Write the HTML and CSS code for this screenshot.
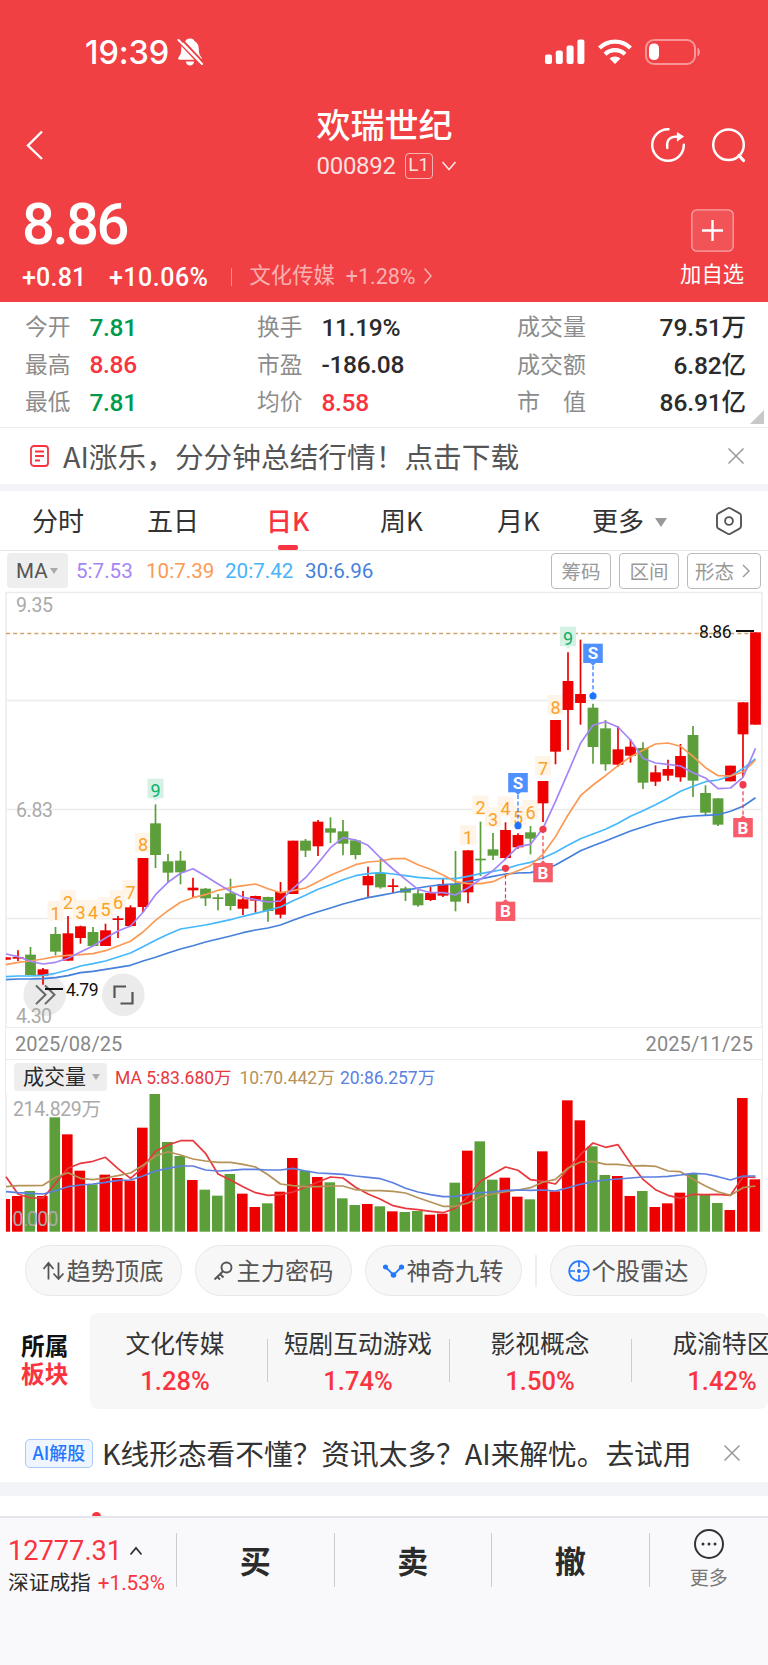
FILE: index.html
```
<!DOCTYPE html>
<html lang="zh-CN">
<head>
  <meta charset="UTF-8" />
  <title>欢瑞世纪 000892</title>
  <meta name="viewport" content="width=device-width, initial-scale=1" />
  <link rel="stylesheet" href="styles.css">
</head>
<body>

  <!-- 顶部 -->
  <header>
    <div class="status-bar">
      <span class="time">19:39</span>
      <svg class="bell" width="26" height="28" viewBox="0 0 26 28">
        <path d="M13 .5c2.500 0 4 1 4.500 2.500 3 1.500 4.300 4.500 4.300 8 0 4.500 1 6 2.700 8.500.8 1.200.2 2.200-1 2.200H2.500c-1.200 0-1.800-1-1-2.200C3.200 17 4.200 15.500 4.200 11c0-3.500 1.300-6.500 4.300-8C9 1.500 10.500.5 13 .5z" fill="#fff"/>
        <path d="M8.800 23.500h8.400c-.5 2.500-2 4-4.200 4s-3.700-1.500-4.200-4z" fill="#fff"/>
        <path d="M2.500-1l25 26.500M-.5 1.500l25 26.500" stroke="#f04043" stroke-width="2"/>
        <path d="M1.500 2l23.500 24" stroke="#fff" stroke-width="2" stroke-linecap="round"/>
      </svg>
      <div class="signals">
        <svg width="40" height="26" viewBox="0 0 40 26" fill="#fff">
          <rect x="0" y="15.500" width="7" height="9.500" rx="2"/>
          <rect x="10.800" y="11.500" width="7" height="13.500" rx="2"/>
          <rect x="21.600" y="6.500" width="7" height="18.500" rx="2"/>
          <rect x="32.400" y="0.500" width="7" height="24.500" rx="2"/>
        </svg>
        <svg width="34" height="26" viewBox="0 0 34 26" fill="none" stroke="#fff" stroke-width="4.200">
          <path d="M1.500 9a22 22 0 0 1 31 0"/>
          <path d="M7 15.200a14.500 14.500 0 0 1 20 0"/>
          <path d="M17 25l-5.500-5.400a8 8 0 0 1 11 0z" fill="#fff" stroke="none"/>
        </svg>
        <svg width="56" height="26" viewBox="0 0 56 26">
          <rect x="1" y="1" width="49" height="24" rx="8" fill="none" stroke="#fff" stroke-opacity=".45" stroke-width="2"/>
          <rect x="4" y="4.500" width="10" height="16.500" rx="4.500" fill="#fff"/>
          <path d="M52.500 8.500c3 1.500 3 7.500 0 9z" fill="#fff" fill-opacity=".5"/>
        </svg>
      </div>
    </div>

    <div class="title-bar">
      <svg class="back" width="18" height="30" viewBox="0 0 18 30"><path d="M16 1.500L2 15.500l14 13.500" fill="none" stroke="#fff" stroke-width="2.400"/></svg>
      <div class="title">
        <h1>欢瑞世纪</h1>
        <div class="code">
          <span class="num">000892</span>
          <span class="level">L1</span>
          <svg width="16" height="12" viewBox="0 0 16 12"><path d="M1.500 2L8 9.500 14.500 2" fill="none" stroke="#fff" stroke-opacity=".85" stroke-width="1.600"/></svg>
        </div>
      </div>
      <div class="actions">
        <svg width="36" height="36" viewBox="0 0 36 36" fill="none" stroke="#fff" stroke-width="2.500">
          <path d="M18.500 2.200a15.800 15.800 0 1 0 15.300 15.500" stroke-linecap="round"/>
          <path d="M17.300 21c-1-8 2-11.500 11-11.500" stroke-linecap="round"/>
          <path d="M27.500 6l5.500 3.500-5.500 4z" fill="#fff" stroke-width="1.200"/>
        </svg>
        <svg width="36" height="36" viewBox="0 0 36 36" fill="none" stroke="#fff" stroke-width="2.500">
          <circle cx="17.500" cy="17.700" r="15.300"/>
          <path d="M28 28.500l4.500 5" stroke-width="3.200" stroke-linecap="round"/>
        </svg>
      </div>
    </div>

    <div class="quote">
      <div>
        <div class="price num">8.86</div>
        <div class="change num">
          <span class="diff">+0.81</span>
          <span class="pct">+10.06%</span>
          <i></i>
          <span class="industry">文化传媒</span>
          <span class="industry-pct">+1.28%</span>
          <svg width="10" height="18" viewBox="0 0 10 18"><path d="M1.500 1.500L8 9l-6.500 7.500" fill="none" stroke="#fff" stroke-opacity=".6" stroke-width="1.500"/></svg>
        </div>
      </div>
      <div class="add">
        <svg width="43" height="43" viewBox="0 0 43 43">
          <rect x=".8" y=".8" width="41.400" height="41.400" rx="5" fill="#fff" fill-opacity=".1" stroke="#fff" stroke-opacity=".5" stroke-width="1.300"/>
          <path d="M11 21.500h21M21.500 11v21" stroke="#fff" stroke-width="2.400"/>
        </svg>
        <span>加自选</span>
      </div>
    </div>
  </header>

  <!-- 行情数据 -->
  <section class="stats num">
    <div><label>今开</label><b class="green">7.81</b></div>
    <div><label>换手</label><b>11.19%</b></div>
    <div class="wide"><label>成交量</label><b>79.51万</b></div>
    <div><label>最高</label><b class="red">8.86</b></div>
    <div><label>市盈</label><b>-186.08</b></div>
    <div class="wide"><label>成交额</label><b>6.82亿</b></div>
    <div><label>最低</label><b class="green">7.81</b></div>
    <div><label>均价</label><b class="red">8.58</b></div>
    <div class="wide"><label>市　值</label><b>86.91亿</b></div>
    <span class="corner"></span>
  </section>

  <section class="ad">
    <svg width="20" height="22" viewBox="0 0 20 22" fill="none" stroke="#f93440" stroke-width="1.800">
      <rect x="1" y="1" width="17" height="20" rx="3"/>
      <path d="M5 6.500h9M5 11h9M5 15.500h5"/>
    </svg>
    <p>AI涨乐，分分钟总结行情！点击下载</p>
    <svg class="close" width="18" height="18" viewBox="0 0 18 18"><path d="M1.500 1.500l15 15M16.500 1.500l-15 15" stroke="#999" stroke-width="1.500"/></svg>
  </section>

  <!-- 周期切换 -->
  <nav class="tabs">
    <a>分时</a>
    <a>五日</a>
    <a class="active">日K</a>
    <a>周K</a>
    <a>月K</a>
    <a class="more">更多<i class="caret"></i></a>
    <svg width="28" height="30" viewBox="0 0 28 30" fill="none" stroke="#555" stroke-width="1.900">
      <path d="M12.700 2.300q1.300-.8 2.600 0l9.200 5q1.500.9 1.500 2.600v10.200q0 1.700-1.500 2.600l-9.200 5q-1.300.8-2.600 0l-9.200-5Q2 21.800 2 20.100V9.900q0-1.700 1.500-2.600z"/>
      <circle cx="14" cy="15" r="3.900"/>
    </svg>
  </nav>

  <section class="ma-row num">
    <span class="ma-select">MA<i class="caret"></i></span>
    <span class="ma5">5:7.53</span>
    <span class="ma10">10:7.39</span>
    <span class="ma20">20:7.42</span>
    <span class="ma30">30:6.96</span>
    <div class="tools">
      <button>筹码</button>
      <button>区间</button>
      <button class="shape">形态<svg width="9" height="14" viewBox="0 0 9 14"><path d="M1 1l6 6-6 6" fill="none" stroke="#999" stroke-width="1.400"/></svg></button>
    </div>
  </section>

  <!-- K线图 -->
  <svg id="kline" class="chart" width="768" height="437" viewBox="0 590 768 437"></svg>

  <div class="dates num"><span>2025/08/25</span><span>2025/11/25</span></div>

  <div class="vol-row num">
    <span class="vol-select">成交量<i class="caret"></i></span>
    <span class="v5">MA 5:83.680万</span>
    <span class="v10">10:70.442万</span>
    <span class="v20">20:86.257万</span>
  </div>
  <svg id="volume" class="chart" width="768" height="140" viewBox="0 1093 768 140"></svg>

  <section class="pills">
    <a>
      <svg width="22" height="20" viewBox="0 0 22 20" fill="none" stroke="#555" stroke-width="1.800"><path d="M.5 8L5.500 2l5 6M5.500 2v16.500M15.500 1.500V18M10.500 12.500l5 5.500 5-5.500"/></svg>趋势顶底
    </a>
    <a>
      <svg width="22" height="20" viewBox="0 0 22 20" fill="none" stroke="#555" stroke-width="1.900"><circle cx="13.500" cy="6.500" r="5"/><path d="M10 10.200L1.500 18.500M7 13l3.500 3.500M4 15.500l3 3"/></svg>主力密码
    </a>
    <a>
      <svg width="22" height="20" viewBox="0 0 22 20" fill="#2279ff" stroke="#2279ff" stroke-width="1.800"><path d="M2.500 6l8 8 8-8" fill="none"/><circle cx="2.500" cy="6" r="1.700"/><circle cx="10.500" cy="14" r="1.900"/><circle cx="18.500" cy="6" r="1.700"/></svg>神奇九转
    </a>
    <i class="line"></i>
    <a>
      <svg width="22" height="22" viewBox="0 0 22 22" fill="none" stroke="#2279ff" stroke-width="1.700"><circle cx="11" cy="11" r="9.800"/><path d="M11 1v6M11 15v6M1 11h6M15 11h6"/><circle cx="11" cy="11" r="1.200" fill="#2279ff"/></svg>个股雷达
    </a>
  </section>

  <!-- 所属板块 -->
  <section class="sector">
    <div class="sector-title">所属<br><em>板块</em></div>
    <div class="sector-list num">
      <div><span>文化传媒</span><b>1.28%</b></div>
      <div><span>短剧互动游戏</span><b>1.74%</b></div>
      <div><span>影视概念</span><b>1.50%</b></div>
      <div><span>成渝特区</span><b>1.42%</b></div>
    </div>
  </section>

  <section class="ai-tip">
    <span class="badge">AI解股</span>
    <p>K线形态看不懂？资讯太多？AI来解忧。去试用</p>
    <svg class="close" width="18" height="18" viewBox="0 0 18 18"><path d="M1.500 1.500l15 15M16.500 1.500l-15 15" stroke="#999" stroke-width="1.500"/></svg>
  </section>

  <div class="next-card"><i></i></div>

  <!-- 底部交易栏 -->
  <footer>
    <div class="index num">
      <div class="index-value">12777.31<svg width="14" height="10" viewBox="0 0 14 10"><path d="M1.500 8.500L7 2l5.500 6.500" fill="none" stroke="#333" stroke-width="1.800"/></svg></div>
      <div class="index-name">深证成指<b>+1.53%</b></div>
    </div>
    <a>买</a>
    <a>卖</a>
    <a>撤</a>
    <div class="footer-more">
      <svg width="32" height="32" viewBox="0 0 32 32"><circle cx="16" cy="16" r="14" fill="none" stroke="#333" stroke-width="2"/><g fill="#333"><circle cx="10" cy="16" r="1.500"/><circle cx="16" cy="16" r="1.500"/><circle cx="22" cy="16" r="1.500"/></g></svg>
      <span>更多</span>
    </div>
  </footer>

  <script src="chart.js"></script>
</body>
</html>
```
FILE: styles.css
```
:root {
  --red: #f93440;
  --header: #f04043;
  --green: #009a4e;
  --text: #2b2b2b;
  --gray: #8c8c8c;
  --line: #ececec;
}

* {
  box-sizing: border-box;
}

body {
  margin: 0;
  width: 768px;
  height: 1665px;
  overflow: hidden;
  display: flex;
  flex-direction: column;
  font-family: "Noto Sans CJK SC", sans-serif;
  color: var(--text);
  background: white;
}

body > * {
  flex-shrink: 0;
}

.num {
  font-family: Roboto, "Noto Sans CJK SC", sans-serif;
}

svg {
  display: block;
  flex-shrink: 0;
}

h1, p {
  margin: 0;
}

b {
  font-weight: 500;
}

/* 顶部 */
header {
  background: var(--header);
  color: white;
  height: 302px;
}

.status-bar {
  display: flex;
  align-items: center;
  height: 104px;
  padding: 0 67px 0 85px;
}

.time {
  font-family: Inter, sans-serif;
  font-size: 32.5px;
  font-weight: 500;
  letter-spacing: -0.1px;
  padding-top: 1px;
}

.bell {
  margin-left: 8px;
}

.signals {
  display: flex;
  align-items: center;
  gap: 13px;
  margin-left: auto;
}

.title-bar {
  display: grid;
  grid-template-columns: 1fr auto 1fr;
  align-items: center;
  height: 82px;
  padding: 0 21px 0 26px;
}

.back {
  margin-bottom: 5px;
}

.title h1 {
  font-size: 34px;
  font-weight: 500;
  line-height: 40px;
}

.title {
  width: 138px;
  margin-left: -2px;
  padding-bottom: 7px;
}

.code {
  display: flex;
  align-items: center;
  height: 34px;
  margin-top: 5px;
  padding-bottom: 1px;
  font-size: 24px;
  color: rgba(255,255,255,0.85);
}

.code .num {
  letter-spacing: -0.3px;
}

.level {
  width: 28px;
  height: 26px;
  margin: 0 8px 0 9px;
  border: 1.5px solid rgba(255,255,255,0.6);
  border-radius: 4px;
  font-family: Roboto, sans-serif;
  font-size: 19px;
  line-height: 22px;
  text-align: center;
  flex-shrink: 0;
}

.actions {
  display: flex;
  justify-content: flex-end;
  gap: 25px;
  margin-bottom: 5px;
}

.quote {
  display: flex;
  justify-content: space-between;
  height: 116px;
  padding: 0 24px 0 22px;
}

.price {
  height: 73px;
  font-size: 58px;
  font-weight: 500;
  line-height: 77px;
  letter-spacing: -2.5px;
}

.change {
  display: flex;
  align-items: center;
  height: 36px;
  font-size: 25px;
  font-weight: 500;
}

.change .diff {
  letter-spacing: 0.2px;
}

.change .pct {
  margin-left: 22.5px;
  letter-spacing: 0.5px;
}

.change i {
  width: 1px;
  height: 18px;
  margin: 0 18px 0 22px;
  background: rgba(255,255,255,0.4);
}

.industry {
  font-size: 21.3px;
  font-weight: 400;
  line-height: 30px;
  margin-top: -2px;
  color: rgba(255,255,255,0.6);
}

.industry-pct {
  margin: -2px 7px 0 11px;
  font-size: 21.5px;
  font-weight: 400;
  color: rgba(255,255,255,0.6);
}

.change svg {
  margin-top: -2px;
}

.add {
  display: flex;
  flex-direction: column;
  align-items: flex-end;
  padding-top: 23px;
  font-size: 21.3px;
}

.add svg {
  margin-right: 10px;
}

.add span {
  line-height: 30px;
  margin-top: 6px;
}

/* 行情数据 */
.stats {
  position: relative;
  display: grid;
  grid-template-columns: 232px 260px 1fr;
  grid-auto-rows: 37.5px;
  height: 126px;
  padding: 5px 22px 0 25px;
  border-bottom: 1.5px solid var(--line);
}

.stats div {
  display: flex;
  align-items: center;
  font-size: 24.5px;
}

.stats label {
  font-size: 22.7px;
  color: var(--gray);
  margin-right: 19px;
}

.stats b {
  padding-top: 3px;
  letter-spacing: -0.3px;
}

.stats .wide b {
  padding-top: 0;
  letter-spacing: -0.1px;
}

.stats .wide {
  justify-content: space-between;
}

.stats .wide label {
  font-size: 23px;
  padding-bottom: 1px;
}

.red {
  color: var(--red);
}

.green {
  color: var(--green);
}

.corner {
  position: absolute;
  right: 4px;
  bottom: 3px;
  border-left: 14px solid transparent;
  border-bottom: 14px solid #c8c8c8;
}

.ad {
  display: flex;
  align-items: center;
  height: 63px;
  padding: 0 23px 0 30px;
  border-bottom: 7px solid #f3f4f8;
  font-size: 28.7px;
  color: #555;
}

.ad p {
  margin: -2px 0 0 13px;
}

.close {
  margin-left: auto;
}

/* 周期切换 */
.tabs {
  display: flex;
  align-items: center;
  height: 60px;
  padding-left: 32px;
  border-bottom: 1.5px solid #e6e6e6;
  font-size: 26px;
  color: #333;
}

.tabs a {
  position: relative;
  line-height: 56px;
  height: 58px;
  width: 115px;
}

.tabs a:nth-child(2) {
  width: 119px;
}

.tabs a:nth-child(3) {
  width: 114px;
}

.tabs a:nth-child(4) {
  width: 117px;
}

.tabs a:nth-child(5) {
  width: 95px;
}

.tabs a.more {
  width: 123px;
}

.tabs .active {
  color: var(--red);
  font-weight: 500;
}

.tabs .active::after {
  content: "";
  position: absolute;
  left: 12px;
  bottom: 0;
  width: 20px;
  height: 5px;
  border-radius: 2px;
  background: var(--red);
}

.caret {
  display: inline-block;
  border: 6px solid transparent;
  border-top: 9px solid #999;
  border-bottom: none;
}

.more .caret {
  margin-left: 11px;
  vertical-align: 4px;
}

.ma-row {
  display: flex;
  align-items: center;
  height: 39px;
  padding: 0 7px;
  font-size: 20.6px;
}

.ma-select {
  display: flex;
  align-items: center;
  width: 61px;
  height: 35px;
  padding-left: 9px;
  margin-right: 8px;
  border-radius: 4px;
  background: #eee;
  color: #555;
}

.ma-select .caret {
  border-width: 4px;
  border-top: 6px solid #aaa;
  border-bottom: none;
  margin-left: 2px;
}

.ma5 { color: #a585f5; width: 70px; }
.ma10 { color: #fb9a55; width: 79px; }
.ma20 { color: #46b4fb; width: 80px; }
.ma30 { color: #4580dc; }

.tools {
  display: flex;
  gap: 8px;
  margin-left: auto;
}

.tools button {
  width: 60px;
  height: 36px;
  padding: 0;
  border: 1.5px solid #bbb;
  border-radius: 4px;
  background: white;
  font-family: "Noto Sans CJK SC", sans-serif;
  font-size: 19.5px;
  line-height: 30px;
  color: #999;
}

.tools .shape {
  display: flex;
  align-items: center;
  justify-content: center;
  gap: 8px;
  width: 74px;
  padding-right: 2px;
}

/* 图表 */
.dates {
  display: flex;
  justify-content: space-between;
  height: 33px;
  margin: 0 5px;
  padding: 0 9px 0 9px;
  border: 1.5px solid var(--line);
  font-size: 20px;
  line-height: 32px;
  letter-spacing: 0.1px;
  color: #888;
}

.vol-row {
  display: flex;
  align-items: center;
  height: 33px;
  margin: 0 5px;
  padding-left: 8px;
  border: 1.5px solid var(--line);
  border-width: 0 1.5px;
  font-size: 17.5px;
}

.vol-select {
  display: flex;
  align-items: center;
  width: 93px;
  height: 28px;
  padding: 0 0 3px 9px;
  margin-right: 8px;
  border-radius: 4px;
  background: #eee;
  font-size: 21px;
}

.vol-select .caret {
  border-width: 4px;
  border-top: 6px solid #aaa;
  border-bottom: none;
  margin: 4px 0 0 6px;
}

.v5 { color: #e8383d; width: 124.5px; }
.v10 { color: #b59258; width: 100.5px; }
.v20 { color: #5c7fe2; }

.chart text {
  font-family: Roboto, "Noto Sans CJK SC", sans-serif;
}

.axis {
  font-size: 19.5px;
  fill: #aaa;
}

/* 工具 */
.pills {
  display: flex;
  align-items: center;
  height: 79px;
  padding: 0 25px 4px;
  gap: 13px;
}

.pills a {
  display: flex;
  align-items: center;
  justify-content: center;
  width: 157px;
  height: 51px;
  padding: 0 1px 2px 0;
  border: 1.5px solid #e8e8e8;
  border-radius: 26px;
  background: #f7f7f7;
  font-size: 24.2px;
  color: #555;
}

.pills a svg {
  margin: 2px 2px 0 0;
}

.line {
  width: 2px;
  height: 32px;
  background: #eee;
}

/* 所属板块 */
.sector {
  display: flex;
  align-items: center;
  height: 97px;
  padding: 1px 0 0 21px;
}

.sector-title {
  width: 69px;
  padding-bottom: 4px;
  font-size: 23.7px;
  font-weight: 700;
  line-height: 28px;
  color: #111;
}

.sector-title em {
  font-style: normal;
  color: var(--red);
}

.sector-list {
  display: flex;
  width: 678px;
  height: 96px;
  overflow: hidden;
  border-radius: 8px;
  background: #f7f7f7;
}

.sector-list div {
  position: relative;
  flex: 0 0 182px;
  display: flex;
  flex-direction: column;
  align-items: center;
  padding-top: 14px;
}

.sector-list div:first-child {
  flex-basis: 177px;
  padding-right: 7px;
}

.sector-list div + div::before {
  content: "";
  position: absolute;
  left: 0;
  top: 26px;
  width: 1px;
  height: 43px;
  background: #ccc;
}

.sector-list span {
  font-size: 24.7px;
  line-height: 36px;
  white-space: nowrap;
  color: #333;
}

.sector-list b {
  font-size: 25.5px;
  line-height: 36px;
  color: var(--red);
}

.ai-tip {
  display: flex;
  align-items: center;
  height: 73px;
  padding: 19px 27px 4px 25px;
}

.badge {
  width: 68px;
  height: 29px;
  border: 1.5px solid #a9c8fb;
  border-radius: 5px;
  background: #eef5ff;
  color: #2279ff;
  font-size: 18px;
  font-weight: 500;
  line-height: 25px;
  text-align: center;
}

.ai-tip p {
  margin: -1px 0 0 9px;
  font-size: 28.7px;
  line-height: 36px;
  white-space: nowrap;
  color: #333;
}

.next-card {
  height: 34px;
  border-top: 14px solid #f3f4f8;
  overflow: hidden;
}

.next-card i {
  display: block;
  width: 9px;
  height: 9px;
  margin: 16px 0 0 92px;
  border-radius: 50%;
  background: var(--red);
}

/* 底部交易栏 */
footer {
  display: flex;
  height: 149px;
  padding-top: 15px;
  border-top: 2px solid #e6e6ea;
  background: #f9f9fc;
}

footer > * {
  height: 54px;
}

.index {
  width: 176px;
  padding-left: 8px;
}

.index-value {
  display: flex;
  align-items: center;
  gap: 7px;
  margin-top: 1px;
  font-size: 27.2px;
  line-height: 34px;
  color: var(--red);
}

.index-name {
  font-size: 20.7px;
  line-height: 30px;
  white-space: nowrap;
}

.index-name b {
  margin-left: 7px;
  font-weight: 400;
  color: var(--red);
}

footer a,
.footer-more {
  border-left: 1px solid #ccc;
}

footer a {
  width: 157.5px;
  font-size: 31px;
  font-weight: 700;
  line-height: 54px;
  text-align: center;
}

.footer-more {
  flex: 1;
  display: flex;
  flex-direction: column;
  align-items: center;
  font-size: 19px;
  color: #777;
}

.footer-more svg {
  margin-top: -5px;
}

.footer-more span {
  line-height: 28px;
  margin-top: 3px;
}
```
FILE: chart.js
```
const RED = "#ee0000";
const GREEN = "#5c9e3a";
const STEP = 12.5;

const cx = i => 5.5 + STEP * i;
const py = v => 580 + v / 3;
const vy = v => 1040 + v / 3;

// 颜色, 最高, 实体上沿, 实体下沿, 最低
const candles = [
  ["r",1132,1132,1139,1139],["r",1111,1131,1136,1143],["g",1101,1124,1185,1185],["r",1164,1168,1187,1214],
  ["g",1041,1062,1115,1126],["r",1008,1060,1142,1142],["r",1037,1039,1074,1091],["g",1041,1056,1098,1098],
  ["r",1031,1051,1098,1098],["r",1008,1015,1020,1074],["r",976,982,1038,1040],["r",834,834,981,997],
  ["g",673,730,825,864],["g",822,844,878,909],["g",813,842,877,913],["r",893,923,931,951],
  ["g",924,926,955,978],["g",942,952,957,991],["g",896,940,978,991],["r",933,958,986,1005],
  ["r",947,948,962,998],["g",950,951,993,1025],["r",906,936,1004,1015],["r",782,782,942,942],
  ["g",777,782,812,831],["r",720,725,799,828],["g",712,745,758,789],["g",720,754,791,826],
  ["g",778,781,825,838],["r",860,888,916,951],["g",836,879,922,926],["r",896,916,921,939],
  ["g",920,925,938,963],["g",930,940,976,980],["r",921,939,960,963],["r",897,912,947,951],
  ["g",813,911,965,994],["r",811,811,937,970],["g",725,836,841,888],["g",759,808,827,840],
  ["r",727,750,834,838],["r",760,765,802,806],["g",738,757,776,823],["r",603,603,670,726],
  ["r",420,420,515,553],["r",217,303,390,510],["r",179,342,369,434],["g",371,383,501,551],
  ["g",420,445,553,572],["r",438,508,554,560],["r",478,500,527,548],["g",487,504,608,627],
  ["r",556,577,605,618],["r",539,567,587,602],["r",492,528,592,605],["g",438,465,602,651],
  ["g",616,639,698,707],["g",655,655,734,738],["r",557,557,604,604],["r",367,367,463,592],
  ["r",157,157,434,434]
];

const ma = {
  "#4580dc": [1199,1197,1197,1196,1193,1187,1178,1174,1168,1162,1156,1143,1132,1119,1107,1097,1086,1077,1068,1058,1050,1044,1035,1021,1007,995,984,972,962,953,946,939,931,924,918,914,912,904,897,889,882,879,878,869,855,834,812,797,783,768,753,741,729,720,712,708,706,704,694,679,653],
  "#46b8fb": [1190,1188,1188,1186,1180,1170,1158,1151,1143,1131,1119,1100,1081,1063,1047,1041,1035,1027,1019,1009,1000,991,981,962,946,928,914,899,887,881,878,882,887,892,895,896,896,889,881,874,867,855,847,834,817,796,776,762,748,730,709,692,674,655,634,619,605,600,588,566,536],
  "#fb9a55": [1154,1147,1143,1137,1130,1126,1124,1121,1112,1098,1084,1056,1021,992,967,953,944,931,923,917,912,926,938,932,924,905,886,870,854,846,843,836,836,854,868,885,905,911,911,905,887,872,857,822,770,705,647,615,587,557,530,511,492,489,499,529,563,587,588,576,540],
  "#a585f5": [1122,1130,1144,1152,1147,1135,1116,1098,1074,1053,1038,997,944,907,880,866,888,912,934,952,959,966,963,925,893,850,803,773,780,796,834,867,898,928,938,938,945,924,898,872,837,800,793,745,664,578,490,436,425,441,480,535,549,553,558,578,594,626,624,592,505]
};

const volumes = [477,468,453,468,232,283,392,433,404,414,422,263,162,306,348,420,449,467,402,461,501,490,455,354,392,411,427,475,495,492,499,514,516,513,524,521,428,332,304,419,413,470,478,334,454,181,241,319,405,408,468,453,501,490,458,401,464,489,510,174,418];

const volMa = {
  "#e8383d": [410,462,474,474,430,385,370,364,352,386,415,383,334,315,302,302,340,402,420,440,458,466,464,456,442,426,411,414,442,462,478,497,505,509,514,518,505,470,424,402,381,391,419,424,432,388,343,309,322,314,370,418,449,466,475,463,464,463,466,411,412],
  "#b59258": [440,437,437,436,412,398,415,419,414,407,399,376,348,335,345,357,363,367,367,373,381,404,432,437,440,440,438,438,449,452,452,454,459,473,486,499,499,489,470,462,455,450,443,426,418,384,366,364,373,373,378,377,379,393,395,418,438,455,466,443,438],
  "#5c7fe2": [455,458,460,462,452,440,435,432,427,421,420,408,393,385,378,378,390,393,391,388,388,390,390,385,393,399,401,403,408,412,416,428,445,456,464,470,469,463,458,456,451,450,451,450,453,443,433,425,420,417,414,411,411,409,405,400,402,410,420,408,408]
};

// 神奇九转: 序号, 数字, 标签上沿
const nine = [
  [4,1,963],[5,2,930],[6,3,960],[7,4,960],[8,5,952],[9,6,931],[10,7,900],[11,8,758],[12,9,596],
  [37,1,736],[38,2,647],[39,3,682],[40,4,649],[41,5,677],[42,6,660],[43,7,528],[44,8,345],[45,9,140]
];

// 买卖点: 序号, 类型, 标签上沿, 圆点
const trades = [[47,"S",191,348],[41,"S",579,737],[40,"B",965,865],[43,"B",849,748],[59,"B",714,614]];

function line(values, y, color) {
  const points = values.map((v, i) => `${Math.max(cx(i), 6)},${y(v).toFixed(1)}`).join(" ");
  return `<polyline points="${points}" fill="none" stroke="${color}" stroke-width="1.7" stroke-linejoin="round"/>`;
}

function drawKline() {
  let s = "";
  [592.5, 700.5, 809.5, 918.5].forEach(y => {
    s += `<path d="M6 ${y}H762" stroke="#ececec" stroke-width="1.3"/>`;
  });
  s += `<path d="M6 592V1027M762 592V1027" stroke="#ececec" stroke-width="1.5"/>`;
  s += `<path d="M6 633.500H750" stroke="#cfa468" stroke-width="1.6" stroke-dasharray="4 3.100"/>`;
  s += `<circle cx="44.700" cy="994.700" r="21.300" fill="#ebebeb"/><circle cx="123.300" cy="994.700" r="21.300" fill="#ebebeb"/>`;
  s += `<path d="M36 985.500l9.500 9.300-9.500 9.300M45 985.500l9.500 9.300-9.500 9.300" fill="none" stroke="#666" stroke-width="2"/>`;
  s += `<path d="M114.500 998v-11.500H126M120.500 1003.500h12V992" fill="none" stroke="#555" stroke-width="2.200"/>`;
  s += `<g class="axis"><text x="16" y="611.700" textLength="37">9.35</text><text x="16" y="817" textLength="37">6.83</text><text x="16" y="1022.500" textLength="36">4.30</text></g>`;

  nine.forEach(([i, n, top]) => {
    const x = cx(i), y = py(top), nineth = n === 9;
    s += `<rect x="${x - 8}" y="${y}" width="16" height="19.5" fill="${nineth ? "#d5f1e4" : "#fff4e8"}"/>`;
    if (nineth) s += `<path d="M${x - 3} ${y + 19.5}h6l-3 2.500z" fill="#d5f1e4"/>`;
  });

  candles.forEach(([c, high, top, bottom, low], i) => {
    const x = cx(i), color = c === "r" ? RED : GREEN;
    const left = Math.max(x - 5.4, 6);
    s += `<path d="M${Math.max(x, 6.5)} ${py(high)}V${py(low)}" stroke="${color}" stroke-width="1.7"/>`;
    s += `<rect x="${left}" y="${py(top)}" width="${x + 5.4 - left}" height="${(bottom - top) / 3}" fill="${color}"/>`;
  });

  nine.forEach(([i, n, top]) => {
    s += `<text x="${cx(i)}" y="${py(top) + 18.5}" font-size="18" text-anchor="middle" fill="${n === 9 ? "#0fae64" : "#fba226"}">${n}</text>`;
  });

  for (const color in ma) s += line(ma[color], py, color);

  trades.forEach(([i, type, top, dot]) => {
    const x = cx(i), y = py(top), d = py(dot), sell = type === "S";
    const color = sell ? "#4f90ff" : "#f75c68";
    const dark = sell ? "#1f74ff" : "#ee3a4a";
    s += `<path d="M${x} ${sell ? y + 22 : d}V${sell ? d : y}" stroke="${dark}" stroke-width="1.2" stroke-dasharray="4 2.500"/>`;
    s += `<circle cx="${x}" cy="${d}" r="3.6" fill="${dark}"/>`;
    s += `<rect x="${x - 9.8}" y="${y}" width="19.6" height="19.3" fill="${color}"/>`;
    s += sell
      ? `<path d="M${x - 3} ${y + 19}h6l-3 3z" fill="${color}"/>`
      : `<path d="M${x - 3} ${y + .3}h6l-3-3z" fill="${color}"/>`;
    s += `<text x="${x}" y="${y + 15.5}" font-size="17" font-weight="700" text-anchor="middle" fill="#fff">${type}</text>`;
  });

  s += `<path d="M45 989h18M736 631h18" stroke="#111" stroke-width="1.8"/>`;
  s += `<text x="66" y="996" font-size="17.5" fill="#111" textLength="32.500">4.79</text>`;
  s += `<text x="699" y="637.700" font-size="17.5" fill="#111" textLength="32.500">8.86</text>`;
  document.getElementById("kline").innerHTML = s;
}

function drawVolume() {
  let s = `<path d="M6 1093V1232M762 1093V1232" stroke="#ececec" stroke-width="1.5"/>`;
  s += `<text class="axis" x="13" y="1115.500" textLength="88">214.829万</text>`;
  volumes.forEach((v, i) => {
    const left = Math.max(cx(i) - 6, 6);
    s += `<rect x="${left}" y="${vy(v)}" width="${cx(i) + 4.6 - left}" height="${1231.7 - vy(v)}" fill="${candles[i][0] === "r" ? RED : GREEN}"/>`;
  });
  for (const color in volMa) s += line(volMa[color], vy, color);
  s += `<text class="axis" x="12.500" y="1225.500" textLength="46">0.000</text>`;
  document.getElementById("volume").innerHTML = s;
}

drawKline();
drawVolume();
```
